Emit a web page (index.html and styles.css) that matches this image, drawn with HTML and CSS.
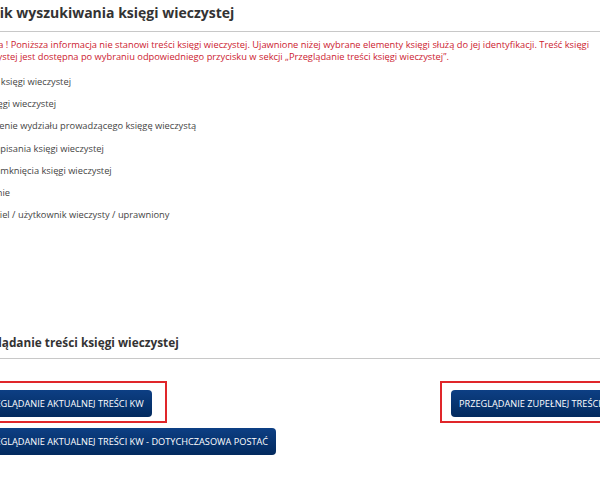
FILE: index.html
```html
<!DOCTYPE html>
<html lang="pl">
<head>
<meta charset="utf-8">
<title>Wynik wyszukiwania księgi wieczystej</title>
<link rel="stylesheet" href="styles.css">
</head>
<body>
<div class="page">
  <section class="section">
    <h2 class="section-title title-result">Wynik wyszukiwania księgi wieczystej</h2>
    <p class="notice">Uwaga ! Poniższa informacja nie stanowi treści księgi wieczystej. Ujawnione niżej wybrane elementy księgi służą do jej identyfikacji. Treść księgi wieczystej jest dostępna po wybraniu odpowiedniego przycisku w sekcji „Przeglądanie treści księgi wieczystej”.</p>
    <ul class="fields">
      <li>Numer księgi wieczystej</li>
      <li>Typ księgi wieczystej</li>
      <li>Oznaczenie wydziału prowadzącego księgę wieczystą</li>
      <li>Data zapisania księgi wieczystej</li>
      <li>Data zamknięcia księgi wieczystej</li>
      <li>Położenie</li>
      <li>Właściciel / użytkownik wieczysty / uprawniony</li>
    </ul>
  </section>
  <section class="section browse">
    <h2 class="section-title title-browse">Przeglądanie treści księgi wieczystej</h2>
    <div class="buttons">
      <div class="col">
        <div class="mark mark-left"><button class="btn">Przeglądanie aktualnej treści KW</button></div>
        <button class="btn btn-old">Przeglądanie aktualnej treści KW - dotychczasowa postać</button>
      </div>
      <div class="col">
        <div class="mark mark-right"><button class="btn">Przeglądanie zupełnej treści KW</button></div>
      </div>
    </div>
  </section>
</div>
</body>
</html>
```
FILE: styles.css
```css
html, body {
  margin: 0;
  padding: 0;
  background: #fff;
  overflow: hidden;
}
body {
  font-family: "Open Sans", "Liberation Sans", sans-serif;
  color: #444;
}
.page {
  margin-left: -40px;
  width: 800px;
}
.section-title {
  box-sizing: border-box;
  margin: 0;
  font-weight: 700;
  color: #333;
  line-height: 20px;
  border-bottom: 1px solid #c8c8c8;
}
.title-result {
  height: 32px;
  padding: 3px 0 0 9px;
  font-size: 14px;
}
.title-browse {
  height: 30px;
  padding: 3px 0 0 6px;
  font-size: 11.8px;
}
.notice {
  margin: 7px 0 0 14px;
  font-size: 9.3px;
  line-height: 12px;
  color: #cc2130;
  width: 630px;
}
.fields {
  list-style: none;
  margin: 8px 0 0 8px;
  padding: 0;
  font-size: 9.3px;
  color: #444;
}
.fields li {
  line-height: 22.2px;
}
.browse {
  margin-top: 103px;
}
.buttons {
  display: grid;
  grid-template-columns: 480px max-content;
  align-items: start;
  margin-top: 22px;
}
.col {
  display: flex;
  flex-direction: column;
  align-items: flex-start;
}
.mark {
  border: 2px solid #e0262a;
  padding: 7px 13px 4px 9px;
}
.mark-right {
  padding-right: 40px;
}
.btn {
  display: block;
  font-family: inherit;
  font-size: 9.2px;
  text-transform: uppercase;
  color: #fff;
  border: none;
  border-radius: 4px;
  height: 27px;
  padding: 0 8px;
  background: linear-gradient(#0d3f84, #022a5e);
}
.btn-old {
  margin-top: 5px;
  margin-left: 11px;
}
```
